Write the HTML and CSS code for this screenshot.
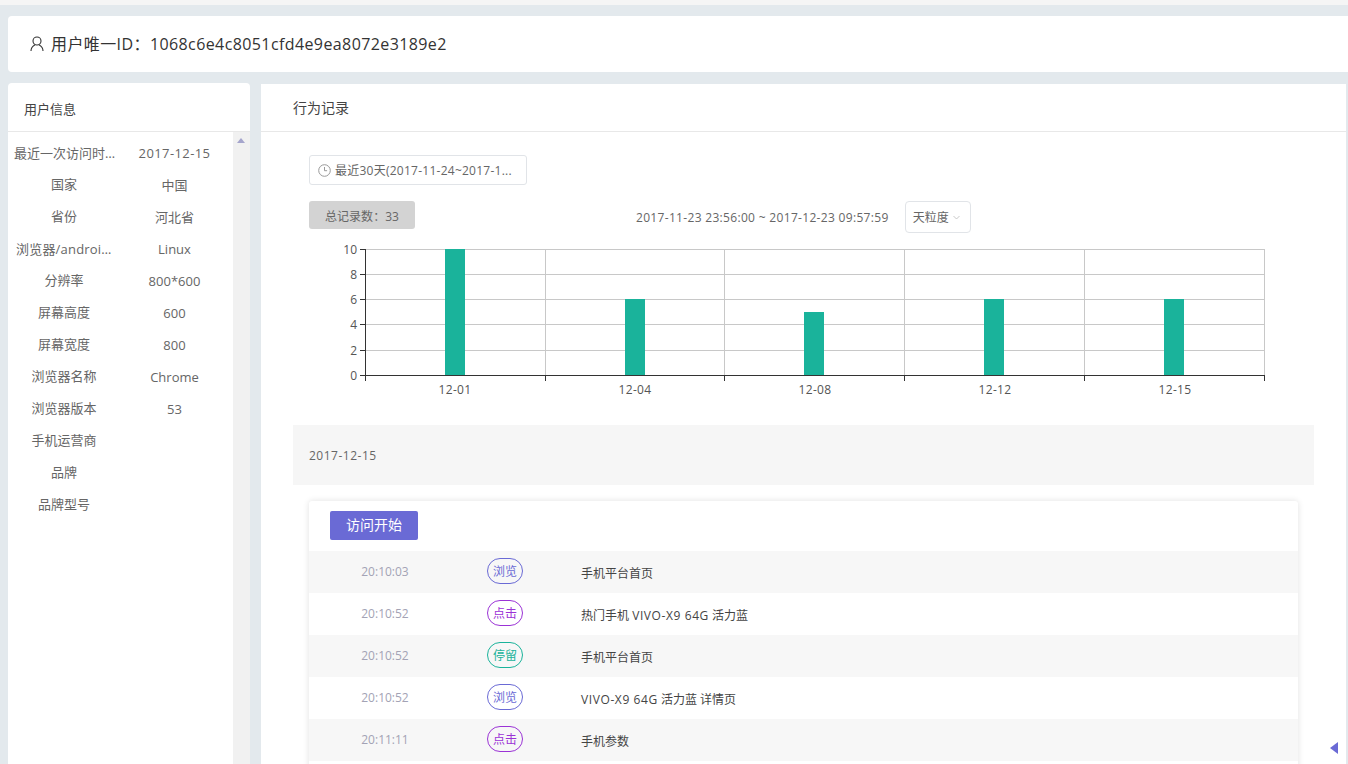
FILE: index.html
```html
<!DOCTYPE html>
<html lang="zh">
<head>
<meta charset="utf-8">
<title>用户行为</title>
<link rel="stylesheet" href="styles.css">
</head>
<body>
<div class="topstrip"></div>
<div class="page">
  <header class="idcard">
    <svg class="user-ico" width="14" height="16" viewBox="0 0 14 16"><circle cx="7" cy="5" r="4" fill="none" stroke="#333" stroke-width="1.1"/><path d="M1 15c0-3 2-5 3.800-6M13 15c0-3-2-5-3.800-6" fill="none" stroke="#333" stroke-width="1.1"/></svg>
    <span>用户唯一ID<span class="colon">：</span>1068c6e4c8051cfd4e9ea8072e3189e2</span>
  </header>
  <div class="cols">
    <aside class="side">
      <div class="card-title side-title">用户信息</div>
      <div class="side-body">
        <div class="info">
          <div class="ellip">最近一次访问时间</div><div class="date">2017-12-15</div>
          <div>国家</div><div>中国</div>
          <div>省份</div><div>河北省</div>
          <div class="ellip ellip-latin">浏览器/android版本</div><div>Linux</div>
          <div>分辨率</div><div>800*600</div>
          <div>屏幕高度</div><div>600</div>
          <div>屏幕宽度</div><div>800</div>
          <div>浏览器名称</div><div>Chrome</div>
          <div>浏览器版本</div><div>53</div>
          <div>手机运营商</div><div></div>
          <div>品牌</div><div></div>
          <div>品牌型号</div><div></div>
        </div>
        <div class="scrollbar"><i class="scroll-up"></i></div>
      </div>
    </aside>
    <main class="main">
      <div class="card-title main-title">行为记录</div>
      <div class="main-body">
        <div class="picker">
          <svg width="13" height="13" viewBox="0 0 13 13"><circle cx="6.500" cy="6.500" r="5.800" fill="none" stroke="#999" stroke-width="1"/><path d="M6.500 3v3.700h2.600" fill="none" stroke="#999" stroke-width="1"/></svg>
          <span>最近30天(2017-11-24~2017-1...</span>
        </div>
        <div class="toolbar">
          <div class="total">总记录数<span class="colon">：</span>33</div>
          <div class="range">2017-11-23 23:56:00 ~ 2017-12-23 09:57:59</div>
          <div class="gran">天粒度<svg width="7" height="5" viewBox="0 0 7 5"><path d="M.5 1l3 3 3-3" fill="none" stroke="#bbb" stroke-width=".8"/></svg></div>
        </div>
        <svg class="chart" width="1000" height="175" viewBox="0 -10 1000 175">
          <g class="grid">
            <path d="M70 5.500H970M70 30.500H970M70 55.500H970M70 80.500H970M70 106.500H970"/>
            <path d="M251.500 5V131M430.500 5V131M610.500 5V131M790.500 5V131M970.500 5V131"/>
          </g>
          <g fill="#1ab39b">
            <rect x="151" y="5" width="20" height="126"/>
            <rect x="331" y="55" width="20" height="76"/>
            <rect x="510" y="68" width="20" height="63"/>
            <rect x="690" y="55" width="20" height="76"/>
            <rect x="870" y="55" width="20" height="76"/>
          </g>
          <path class="axis" d="M71.500 5V131.500M66 5.500H71M66 30.500H71M66 55.500H71M66 80.500H71M66 106.500H71M66 131.500H970.500M71.500 131V137M251.500 131V137M430.500 131V137M610.500 131V137M790.500 131V137M970.500 131V137"/>
          <g class="ylab">
            <text x="63" y="10">10</text><text x="63" y="35">8</text><text x="63" y="60">6</text><text x="63" y="85">4</text><text x="63" y="111">2</text><text x="63" y="136">0</text>
          </g>
          <g class="xlab">
            <text x="161" y="150">12-01</text><text x="341" y="150">12-04</text><text x="521" y="150">12-08</text><text x="701" y="150">12-12</text><text x="881" y="150">12-15</text>
          </g>
        </svg>
        <div class="dateband">2017-12-15</div>
        <section class="timeline">
          <div class="tl-head"><button class="start">访问开始</button></div>
          <div class="row"><div class="time">20:10:03</div><div class="tagcell"><span class="tag view">浏览</span></div><div class="what">手机平台首页</div></div>
          <div class="row"><div class="time">20:10:52</div><div class="tagcell"><span class="tag click">点击</span></div><div class="what">热门手机 <span class="latin">VIVO-X9 64G</span> 活力蓝</div></div>
          <div class="row"><div class="time">20:10:52</div><div class="tagcell"><span class="tag stay">停留</span></div><div class="what">手机平台首页</div></div>
          <div class="row"><div class="time">20:10:52</div><div class="tagcell"><span class="tag view">浏览</span></div><div class="what"><span class="latin">VIVO-X9 64G</span> 活力蓝 详情页</div></div>
          <div class="row"><div class="time">20:11:11</div><div class="tagcell"><span class="tag click">点击</span></div><div class="what">手机参数</div></div>
        </section>
      </div>
      <i class="collapse"></i>
    </main>
  </div>
</div>
</body>
</html>
```
FILE: styles.css
```css
* { box-sizing: border-box; }
html, body { margin: 0; height: 764px; overflow: hidden; }
body {
  background: #e3e9ed;
  font-family: "Open Sans", "Noto Sans CJK SC", sans-serif;
  font-size: 13px;
  color: #666;
}
.colon { font-family: "Noto Sans CJK TC", sans-serif; }
.topstrip { height: 5px; background: #f5f5f5; }
.page { padding: 11px 0 0 8px; }
.idcard {
  height: 56px;
  background: #fff;
  border-radius: 4px 0 0 4px;
  display: flex;
  align-items: center;
  padding: 0 0 2px 22px;
  gap: 7px;
  font-size: 16px;
  letter-spacing: .4px;
  color: #333;
}
.user-ico { margin-top: 2px; }
.cols { display: flex; margin-top: 11px; gap: 11px; padding-right: 2px; }
.side { width: 242px; height: 681px; background: #fff; border-radius: 4px 4px 0 0; flex: none; }
.card-title {
  height: 49px;
  line-height: 52px;
  border-bottom: 1px solid #e8e8e8;
  color: #444;
  font-size: 13px;
}
.side-title { padding-left: 16px; }
.side-body { display: flex; }
.info {
  width: 225px;
  padding: 5px 5px 0 0;
  display: grid;
  grid-template-columns: 112px 109px;
  grid-auto-rows: 32px;
  text-align: center;
  line-height: 32px;
}
.info > div { min-width: 0; }
.info > div:nth-child(odd) { margin-top: -1px; }
.date { letter-spacing: .4px; }
.ellip { white-space: nowrap; overflow: hidden; text-overflow: ellipsis; padding: 1px 4px 0 6px; }
.ellip-latin { padding: 1px 6px 0 8px; letter-spacing: .2px; }
.scrollbar { width: 17px; height: 632px; background: #f1f1f1; padding: 6px 0 0 4px; }
.scroll-up { display: block; width: 0; height: 0; border: 4px solid transparent; border-top: 0; border-bottom: 5px solid #a5a5cc; }
.main { flex: 1; height: 680px; background: #fff; position: relative; min-width: 0; margin-top: 1px; overflow: hidden; }
.main-title { height: 48px; line-height: 48px; padding-left: 32px; font-size: 14px; }
.main-body { padding: 23px 32px 0 32px; }
.picker {
  width: 218px;
  height: 30px;
  margin-left: 16px;
  border: 1px solid #e1e4e8;
  border-radius: 3px;
  display: flex;
  align-items: center;
  gap: 4px;
  padding-left: 8px;
  font-size: 12px;
  letter-spacing: .25px;
  white-space: nowrap;
}
.toolbar { display: flex; margin: 16px 0 0 16px; height: 32px; }
.total {
  width: 106px;
  height: 28px;
  line-height: 30px;
  background: #d3d3d3;
  border-radius: 3px;
  text-align: center;
  font-size: 12px;
}
.range { margin-left: 221px; line-height: 34px; font-size: 12px; letter-spacing: .32px; white-space: nowrap; }
.gran {
  margin-left: 16px;
  width: 66px;
  height: 32px;
  line-height: 32px;
  border: 1px solid #e1e4e8;
  border-radius: 4px;
  padding-left: 7px;
  font-size: 12px;
}
.gran svg { margin-left: 4px; vertical-align: 2px; }
.chart { display: block; margin-top: 1px; margin-left: 1px; }
.grid path { stroke: #c8c8c8; stroke-width: 1; fill: none; }
.axis { stroke: #333; stroke-width: 1; fill: none; }
.ylab text { text-anchor: end; font-size: 12px; fill: #555; }
.xlab text { text-anchor: middle; font-size: 12px; letter-spacing: .3px; fill: #555; }
.dateband {
  height: 60px;
  line-height: 62px;
  background: #f6f6f6;
  margin: 16px 0 0 0;
  padding-left: 16px;
  font-size: 12px;
  letter-spacing: .5px;
}
.timeline {
  margin: 16px 16px 0 16px;
  background: #fff;
  border-radius: 3px;
  box-shadow: 0 0 6px rgba(0, 0, 0, .12);
  padding-bottom: 42px;
}
.tl-head { height: 50px; padding: 10px 0 0 21px; }
.start {
  width: 88px;
  height: 29px;
  border: 0;
  border-radius: 2px;
  background: #6a6ad5;
  color: #fff;
  font: 14px "Open Sans", "Noto Sans CJK SC", sans-serif;
  padding: 0 0 3px;
}
.row { height: 42px; display: grid; grid-template-columns: 152px 88px 1fr; align-items: center; }
.row:nth-child(even) { background: #f7f7f7; }
.time { text-align: center; color: #a3a3b5; font-size: 12px; margin-top: -2px; }
.tagcell { text-align: center; margin-top: -3px; }
.tag {
  display: inline-block;
  width: 36px;
  height: 26px;
  line-height: 26px;
  border: 1px solid;
  border-radius: 13px;
  text-align: center;
  font-size: 12px;
}
.view { color: #6a6ad5; }
.click { color: #9b33d6; }
.stay { color: #1ab39b; }
.what { padding-left: 32px; color: #444; font-size: 12px; margin-top: 1px; }
.latin { letter-spacing: .6px; }
.collapse {
  position: absolute;
  left: 1069px;
  top: 658px;
  width: 0;
  height: 0;
  border: 6.500px solid transparent;
  border-left: 0;
  border-right: 8px solid #6a6ad5;
}
```
